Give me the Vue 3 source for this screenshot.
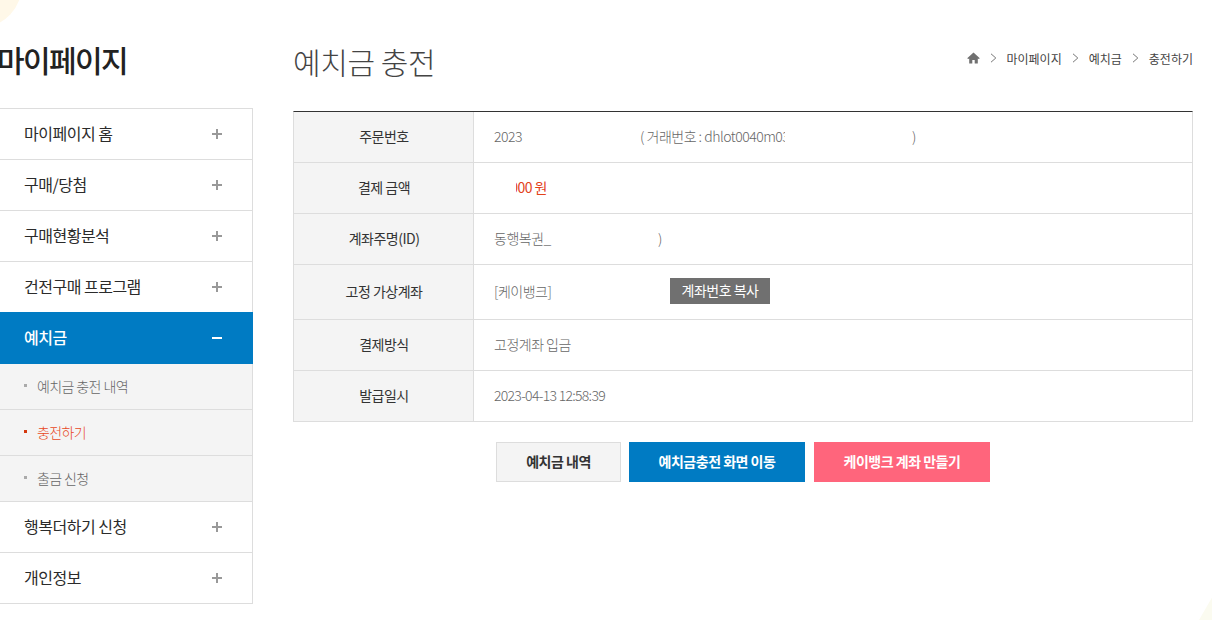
<script setup>
const menu = [
  { label: '마이페이지 홈' },
  { label: '구매/당첨' },
  { label: '구매현황분석' },
  { label: '건전구매 프로그램' },
  { label: '예치금', active: true, subs: [
    { label: '예치금 충전 내역' },
    { label: '충전하기', current: true },
    { label: '출금 신청' },
  ] },
  { label: '행복더하기 신청' },
  { label: '개인정보' },
]
</script>

<template>
  <div class="page">
    <div class="deco-tl"></div>
    <div class="deco-br"></div>
    <aside class="side">
      <h2 class="side-title">마이페이지</h2>
      <ul class="menu">
        <template v-for="m in menu" :key="m.label">
          <li class="item" :class="{ active: m.active }">
            <span>{{ m.label }}</span>
            <i class="sign" :class="{ minus: m.active }"></i>
          </li>
          <li v-for="s in m.subs" :key="s.label" class="sub" :class="{ current: s.current }">
            <i class="dot"></i><span>{{ s.label }}</span>
          </li>
        </template>
      </ul>
    </aside>
    <main class="main">
      <header class="head">
        <h1>예치금 충전</h1>
        <nav class="crumb">
          <svg class="home" width="13" height="12" viewBox="0 0 13 12"><path fill="#707070" d="M6.5 .5 .2 6.2 1.2 7 2.2 6.4V11.5H5.3V8H7.7V11.5H10.8V6.4L11.8 7 12.8 6.2Z"/></svg>
          <svg class="gt" width="7" height="10" viewBox="0 0 7 10"><path fill="none" stroke="#777" d="M1 .8 5.8 5 1 9.2"/></svg>
          <span>마이페이지</span>
          <svg class="gt" width="7" height="10" viewBox="0 0 7 10"><path fill="none" stroke="#777" d="M1 .8 5.8 5 1 9.2"/></svg>
          <span>예치금</span>
          <svg class="gt" width="7" height="10" viewBox="0 0 7 10"><path fill="none" stroke="#777" d="M1 .8 5.8 5 1 9.2"/></svg>
          <span>충전하기</span>
        </nav>
      </header>
      <div class="table">
        <div class="row"><div class="th">주문번호</div><div class="td"><span>2023</span><span class="trade">( 거래번호 : dhlot0040m03</span><span class="close1">)</span></div></div>
        <div class="row"><div class="th">결제 금액</div><div class="td"><span class="amount"><span>000 원</span></span></div></div>
        <div class="row"><div class="th">계좌주명(ID)</div><div class="td"><span>동행복권_</span><span class="close2">)</span></div></div>
        <div class="row tall"><div class="th">고정 가상계좌</div><div class="td"><span>[케이뱅크]</span><button class="copy">계좌번호 복사</button></div></div>
        <div class="row"><div class="th">결제방식</div><div class="td">고정계좌 입금</div></div>
        <div class="row"><div class="th">발급일시</div><div class="td date">2023-04-13 12:58:39</div></div>
      </div>
      <div class="actions">
        <button class="btn light">예치금 내역</button>
        <button class="btn blue">예치금충전 화면 이동</button>
        <button class="btn pink">케이뱅크 계좌 만들기</button>
      </div>
    </main>
  </div>
</template>

<style>
html, body { margin: 0; background: #fff; overflow: hidden; }
</style>

<style scoped>
* { box-sizing: border-box; }
.page {
  position: relative;
  width: 1212px;
  height: 620px;
  overflow: hidden;
  display: flex;
  font-family: "Noto Sans CJK KR", "Noto Sans", sans-serif;
  color: #222;
}
.deco-tl {
  position: absolute; left: -58px; top: -58px;
  width: 80px; height: 85px; border-radius: 50%;
  background: #fff8e8;
}
.deco-br {
  position: absolute; left: 1199px; top: 598px;
  width: 60px; height: 60px; transform: rotate(30deg);
  background: #fbfbf0;
}
.side { position: relative; width: 253px; flex: none; padding-top: 37px; }
.side-title {
  margin: 0 0 0 -3px; height: 71px;
  font-size: 30px; line-height: 44px; font-weight: 500; letter-spacing: -1.6px; color: #222;
}
.menu { list-style: none; margin: 0; padding: 0; border-top: 1px solid #ddd; border-right: 1px solid #ddd; }
.item {
  height: 51px; padding: 0 30px 0 24px;
  display: flex; align-items: center; justify-content: space-between;
  border-bottom: 1px solid #ddd;
  font-size: 16px; font-weight: 400; letter-spacing: -0.5px; color: #2b2b2b; background: #fff;
}
.item span { position: relative; top: -1px; }
.item.active { height: 52px; margin: -1px -1px 0 0; padding-right: 31px; background: #007bc3; color: #fff; border-bottom: 0; font-weight: 500; }
.sign { position: relative; width: 10px; height: 10px; }
.sign::before { content: ""; position: absolute; left: 0; top: 4px; width: 10px; height: 2px; background: #999; }
.sign::after { content: ""; position: absolute; left: 4px; top: 0; width: 2px; height: 10px; background: #999; }
.sign.minus::before { background: #fff; }
.sign.minus::after { display: none; }
.sub {
  height: 46px; padding: 0 0 2px 24px;
  display: flex; align-items: center; gap: 10px;
  background: #f4f4f4; border-bottom: 1px solid #ddd;
  font-size: 14px; font-weight: 300; letter-spacing: -0.6px; color: #666;
}
.dot { width: 3px; height: 3px; background: #aaa; position: relative; top: 0; }
.sub.current { color: #e8481e; }
.sub.current .dot { background: #d4380d; }
.main { position: relative; width: 900px; margin-left: 40px; padding-top: 36px; }
.head { height: 75px; display: flex; justify-content: space-between; align-items: flex-start; }
.head h1 { margin: 0; font-size: 30px; line-height: 50px; font-weight: 300; letter-spacing: -0.4px; color: #444; }
.crumb {
  margin-top: 13px; display: flex; align-items: center; height: 18px;
  font-size: 12px; letter-spacing: 0; color: #444; white-space: nowrap;
}
.crumb .home { margin: 0 10px 0 0; }
.crumb .gt { margin: 0 10px 0 0; }
.crumb span { margin-right: 10px; }
.crumb span:last-child { margin-right: 0; }
.table { border-top: 1px solid #333; border-right: 1px solid #ddd; border-left: 1px solid #ddd; }
.row { display: flex; height: 51px; border-bottom: 1px solid #ddd; }
.row.tall { height: 55px; }
.th {
  width: 180px; flex: none; background: #f4f4f4; border-right: 1px solid #ddd;
  display: flex; align-items: center; justify-content: center; padding: 0 0 3px 1px;
  font-size: 14px; font-weight: 400; letter-spacing: -0.5px; color: #333;
}
.td {
  position: relative; flex: 1; padding: 0 0 3px 20px;
  display: flex; align-items: center;
  font-size: 14px; font-weight: 300; letter-spacing: -0.5px; color: #666;
}
.trade { position: absolute; left: 166px; width: 145px; overflow: hidden; white-space: nowrap; }
.close1 { position: absolute; left: 438px; }
.close2 { position: absolute; left: 184px; }
.amount { margin-left: 22px; width: 31px; overflow: hidden; display: flex; justify-content: flex-end; white-space: nowrap; color: #e2421a; font-weight: 400; }
.amount span { flex: none; }
.copy {
  position: absolute; left: 196px; top: 13px;
  width: 100px; height: 26px; border: 0; padding: 0 0 2px;
  background: #707070; color: #fff;
  font: 400 14px "Noto Sans CJK KR", sans-serif; letter-spacing: -0.5px;
}
.date { letter-spacing: -0.7px; }
.actions { display: flex; justify-content: center; margin-top: 20px; }
.btn {
  height: 40px; padding: 0 0 3px; border: 0;
  font: 700 14px "Noto Sans CJK KR", sans-serif; letter-spacing: -0.5px; color: #fff;
}
.light { width: 125px; background: #f4f4f4; border: 1px solid #ddd; color: #333; margin-right: 8px; }
.blue { width: 176px; background: #007bc3; margin-right: 9px; }
.pink { width: 176px; background: #ff657c; }
</style>
